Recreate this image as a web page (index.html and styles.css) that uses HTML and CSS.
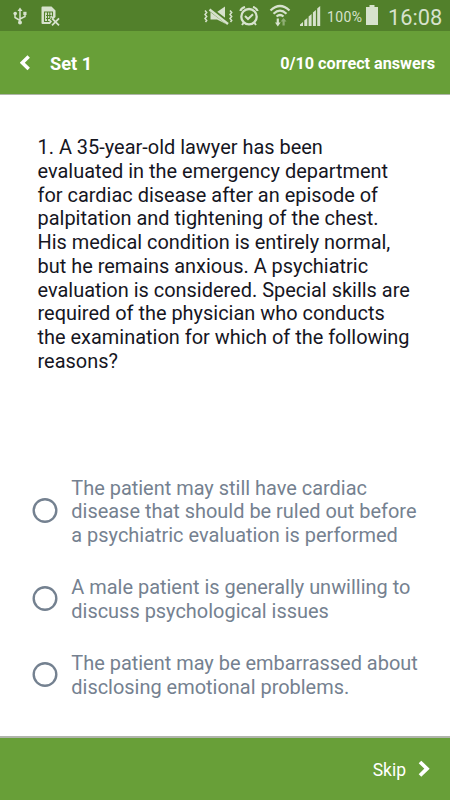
FILE: index.html
```html
<!DOCTYPE html>
<html lang="en">
<head>
  <meta charset="UTF-8" />
  <meta name="viewport" content="width=device-width, initial-scale=1.0" />
  <title>Set 1</title>
  <link rel="stylesheet" href="styles.css">
</head>
<body>
  <div class="status-bar">
    <div class="status-left">
      <svg class="usb" width="14" height="18" viewBox="0 0 14 18">
        <path d="M7 2V15M7 13.500L2 10.500V6.500M7 12L12 9.500V6" fill="none" stroke="currentColor" stroke-width="1.500"/>
        <path d="M7 .5L9.500 4H4.500Z" fill="currentColor"/>
        <circle cx="7" cy="15.500" r="2" fill="currentColor"/>
        <circle cx="2.200" cy="6.500" r="1.800" fill="currentColor"/>
        <rect x="10.300" y="4.800" width="3.200" height="3.200" fill="currentColor"/>
      </svg>
      <svg class="sim" width="19" height="20" viewBox="0 0 19 20">
        <path d="M1.500 .5H10.500L14.500 4.500V11L12.500 13L10.500 11.500L9 13.500L11 15.500L9 18H1.500Q.5 18 .5 17V1.500Q.5 .5 1.500 .5Z" fill="currentColor"/>
        <path d="M3 6H12M5 9.500H10.500M5 12.500H9M3.500 6V15.500H8.500M6.500 6V15.500M8.800 6V12M11.500 6V10.500" fill="none" stroke="#52802b" stroke-width="1.100"/>
        <path d="M11 12.300L18 19.300M18 12.300L11 19.300" stroke="currentColor" stroke-width="1.800"/>
      </svg>
    </div>
    <div class="status-right">
      <svg class="mute" width="29" height="20" viewBox="0 0 29 20">
        <path d="M6.500 6H13L21 .5V17.500L13 13.500H6.500Z" fill="currentColor"/>
        <path d="M6 3L25 17.500" stroke="#52802b" stroke-width="4.500"/>
        <path d="M5.500 3.500L24 18" stroke="currentColor" stroke-width="2.400"/>
        <path d="M1 4.500L2.700 6.500L1 8.500L2.700 10.500L1 12.500L2.700 14.500L1.500 16M26 4.500L27.700 6.500L26 8.500L27.700 10.500L26 12.500L27.700 14.500L26.500 16" fill="none" stroke="currentColor" stroke-width="1.500"/>
      </svg>
      <svg class="alarm" width="20" height="20" viewBox="0 0 20 20" fill="none" stroke="currentColor">
        <circle cx="10" cy="10.700" r="7.700" stroke-width="2.300"/>
        <path d="M6 10L9 13L14 8.200" stroke-width="2"/>
        <path d="M1.300 5Q2.300 2 6 1M14 1Q17.700 2 18.700 5" stroke-width="2.200"/>
        <path d="M4.500 17L3 19M15.500 17L17 19" stroke-width="2"/>
      </svg>
      <svg class="wifi" width="22" height="23" viewBox="0 0 22 23">
        <path d="M1.500 6.500Q11 -2.500 20.500 6.500M4.500 9.700Q11 3.700 17.500 9.700M7.500 12.500Q11 9.500 14.500 12.500" fill="none" stroke="currentColor" stroke-width="2.200"/>
        <path d="M7.700 14.500H9.900V18.500H11.700L8.800 22.500L6 18.500H7.700Z" fill="currentColor"/>
        <path d="M14.500 14L17.500 17.500H15.700V21.500H13.500V17.500H11.700Z" fill="#8fae75"/>
      </svg>
      <svg class="signal" width="21" height="20" viewBox="0 0 21 20" fill="currentColor">
        <path d="M0 20V18.500L3 16V20ZM4.300 20V14.500L7.300 12V20ZM8.600 20V10.500L11.600 8V20ZM12.900 20V6.500L15.900 4V20ZM17.200 20V2.500L20.200 0V20Z"/>
      </svg>
      <span class="percent">100%</span>
      <svg class="battery" width="12" height="20" viewBox="0 0 12 20">
        <path d="M0 2H3.500V0H8.500V2H12V20H0Z" fill="currentColor"/>
      </svg>
      <span class="clock">16:08</span>
    </div>
  </div>

  <div class="header">
    <svg class="back" width="10" height="16" viewBox="0 0 10 16">
      <path d="M8.700 1.500L2.300 7.700L8.700 14" fill="none" stroke="white" stroke-width="3.500"/>
    </svg>
    <span class="title">Set 1</span>
    <span class="score">0/10 correct answers</span>
  </div>

  <div class="content">
    <p class="question">
      1. A 35-year-old lawyer has been<br/>
      evaluated in the emergency department<br/>
      for cardiac disease after an episode of<br/>
      palpitation and tightening of the chest.<br/>
      His medical condition is entirely normal,<br/>
      but he remains anxious. A psychiatric<br/>
      evaluation is considered. Special skills are<br/>
      required of the physician who conducts<br/>
      the examination for which of the following<br/>
      reasons?
    </p>

    <div class="answers">
      <div class="answer">
        <svg class="radio" width="26" height="26" viewBox="0 0 26 26"><circle cx="13" cy="12.500" r="11.300"/></svg>
        <span>The patient may still have cardiac<br/>disease that should be ruled out before<br/>a psychiatric evaluation is performed</span>
      </div>
      <div class="answer">
        <svg class="radio" width="26" height="26" viewBox="0 0 26 26"><circle cx="13" cy="12.500" r="11.300"/></svg>
        <span>A male patient is generally unwilling to<br/>discuss psychological issues</span>
      </div>
      <div class="answer">
        <svg class="radio" width="26" height="26" viewBox="0 0 26 26"><circle cx="13" cy="12.500" r="11.300"/></svg>
        <span>The patient may be embarrassed about<br/>disclosing emotional problems.</span>
      </div>
    </div>
  </div>

  <div class="footer">
    <span class="skip">Skip</span>
    <svg class="next" width="12" height="18" viewBox="0 0 12 18">
      <path d="M2 2L9 8.700L2 15.500" fill="none" stroke="white" stroke-width="3.700"/>
    </svg>
  </div>
</body>
</html>
```

FILE: styles.css
```css
* {
  box-sizing: border-box;
}
body {
  margin: 0;
  height: 800px;
  display: flex;
  flex-direction: column;
  overflow: hidden;
  font-family: Roboto, sans-serif;
  background: #fff;
}
svg {
  display: block;
  flex: none;
}
.status-bar {
  height: 31px;
  display: flex;
  justify-content: space-between;
  padding: 0 8px 0 13px;
  background: #52802b;
  color: #d7e2cd;
}
.status-left, .status-right {
  display: flex;
  align-items: flex-start;
}
.usb {
  margin-top: 7px;
}
.sim {
  margin: 6px 0 0 14px;
}
.mute {
  margin: 6px 6px 0 0;
}
.alarm {
  margin: 6px 10px 0 0;
}
.wifi {
  margin: 4px 9px 0 0;
}
.signal {
  margin: 6px 6px 0 0;
}
.percent {
  width: 37px;
  font-size: 14px;
  line-height: 34px;
  letter-spacing: 0.4px;
}
.battery {
  margin: 5px 10px 0 2px;
}
.clock {
  width: 54px;
  font-size: 21.800px;
  line-height: 35px;
  white-space: nowrap;
}
.header {
  height: 64px;
  display: flex;
  align-items: center;
  padding: 0 15px 0 20px;
  background: #689f38;
  border-bottom: 1px solid #aeb5a8;
  color: white;
  font-weight: 700;
}
.title {
  margin: 1px 0 0 20px;
  font-size: 18.200px;
}
.score {
  margin: 1px 0 0 auto;
  font-size: 16.200px;
}
.content {
  flex: 1;
  padding: 41px 0 0 32px;
}
.question {
  margin: 0 0 0 5.500px;
  font-size: 19.960px;
  line-height: 23.750px;
  color: #16161f;
  white-space: nowrap;
}
.answers {
  display: flex;
  flex-direction: column;
  gap: 28.500px;
  margin-top: 103px;
  font-size: 19.960px;
  line-height: 23.750px;
  color: #758190;
  white-space: nowrap;
}
.answer {
  display: flex;
  align-items: center;
  gap: 13.300px;
}
.radio {
  margin-top: -2px;
  fill: none;
  stroke: #748190;
  stroke-width: 2.400px;
}
.footer {
  height: 64px;
  display: flex;
  align-items: center;
  justify-content: flex-end;
  padding-right: 20px;
  background: #689f38;
  border-top: 2px solid #b0b5ac;
  color: white;
}
.skip {
  margin: 2px 12px 0 0;
  font-size: 17.500px;
}
```
